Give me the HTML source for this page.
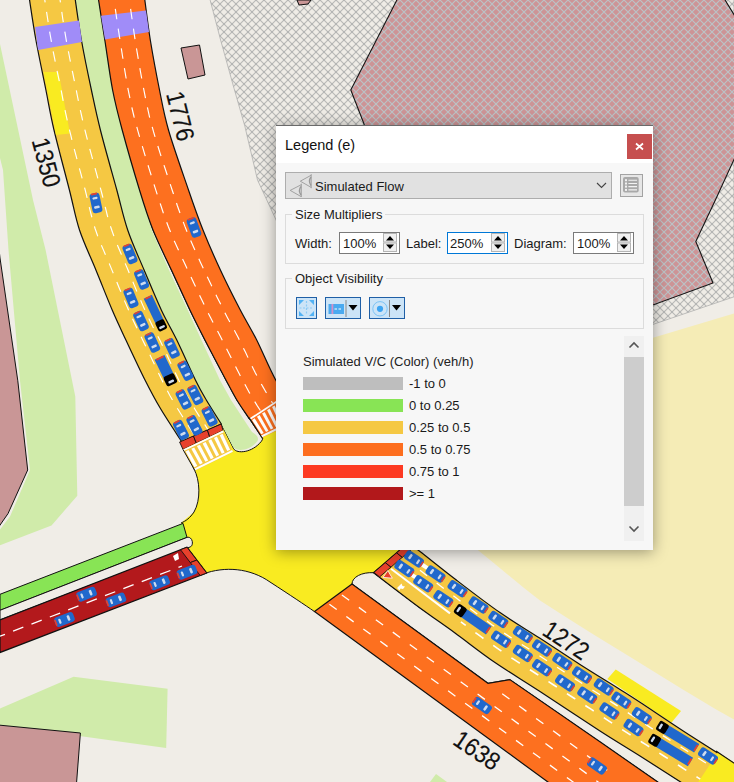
<!DOCTYPE html>
<html><head><meta charset="utf-8">
<style>
html,body{margin:0;padding:0;}
body{width:734px;height:782px;overflow:hidden;position:relative;font-family:"Liberation Sans",sans-serif;}
</style></head><body>
<svg width="734" height="782" viewBox="0 0 734 782" style="position:absolute;left:0;top:0"><defs>
<pattern id="hatch" width="8" height="8" patternUnits="userSpaceOnUse">
<rect width="8" height="8" fill="#efece6"/>
<path d="M0,0 L8,8 M8,0 L0,8" stroke="#b9b9b7" stroke-width="1.15"/>
<rect x="3.3" y="3.3" width="1.4" height="1.4" fill="#aeb0b0"/><rect x="-0.7" y="-0.7" width="1.4" height="1.4" fill="#aeb0b0"/><rect x="7.3" y="7.3" width="1.4" height="1.4" fill="#aeb0b0"/><rect x="7.3" y="-0.7" width="1.4" height="1.4" fill="#aeb0b0"/><rect x="-0.7" y="7.3" width="1.4" height="1.4" fill="#aeb0b0"/>
</pattern>
<pattern id="hatchp" width="8" height="8" patternUnits="userSpaceOnUse">
<rect width="8" height="8" fill="#cd9496"/>
<path d="M0,0 L8,8 M8,0 L0,8" stroke="#bcc3c6" stroke-width="1.15"/>
<rect x="3.3" y="3.3" width="1.4" height="1.4" fill="#b8c0c4"/>
</pattern>
</defs><rect width="734" height="782" fill="#f0ede7"/><path d="M420,500 L479,551 C500,568 520,585 540,600.6 C570,620 610,645 646,666.7 C680,688 710,706 734,719.6 L734,313.6 L653,337.7 L420,420 Z" fill="#f5ecb6"/>
<path d="M209.6,-2 L220.6,40 L234,88.3 L244.8,126 L257.5,180 L275.8,219.4 L300,275 L653,324.4 L734,296.8 L734,-2 Z" fill="url(#hatch)" stroke="#b0b0ae" stroke-width="0.8"/>
<path d="M402,-10 L350.8,90 L364.4,125 L420,200 L653,305 L713,283 L695.8,241.5 L715.4,200 L737,153 L737,19.5 L722,-5 Z" fill="url(#hatchp)" stroke="#151515" stroke-width="1.1"/>
<path d="M297,0 L311,0 L308,4 L299,5 Z" fill="#c99696" stroke="#111" stroke-width="1"/>
<path d="M181,48 L199.5,45 L205,75 L188,79 Z" fill="#c99696" stroke="#111" stroke-width="1"/>
<path d="M0,44 L33,200 L45.6,250 L75.3,396.6 L77.3,495.7 L51.5,525.5 L0,545.3 Z" fill="#d0ebaa"/>
<path d="M-2,150 L3,170 L8.5,250 L20,380.8 L30,470 L10,516.5 L-2,532 Z" fill="#f0ede7"/>
<path d="M-2,240 L0,258 L17.8,380.8 L27.7,470 L8,513.6 L-2,528 Z" fill="#c99696" stroke="#111" stroke-width="1"/>
<path d="M0,708.6 L73.6,676.7 L167.6,688.7 L166.2,748 L0,725 Z" fill="#d0ebaa"/>
<path d="M-2,725 L80.4,733 L76.3,786 L-2,786 Z" fill="#c99696" stroke="#111" stroke-width="1"/>
<path d="M436,774 L447,782 L430,782 Z" fill="#d0ebaa"/>
<path d="M181.7,441.7 L194,469 C200,480 201,500 194,512 L181,523 L186,548 L206.7,573 C225,566 250,568 270,582 C290,595 305,605 314.5,611.6 L352,584 L373.5,572.7 L420,545 L420,400 L276,400 L223,424 Z" fill="#f9eb21"/>
<path d="M181.7,441.7 L194,469 C200,480 201,500 194,512 C190,518 186,521 181,523" fill="none" stroke="#111" stroke-width="1"/>
<path d="M203,574 C225,566 250,568 270,582 C290,595 305,605 314.5,611.6" fill="none" stroke="#111" stroke-width="1"/>
<path d="M607.4,679 L615.7,669.5 L681,711 L671.4,722.8 Z" fill="#f9eb21"/>
<path d="M352,584 C352,577 362,572 373.5,572.7 L420,608 L690,788 L665,787 L509.8,679.6 L488,683.3 Z" fill="#f0ede7" stroke="#111" stroke-width="1"/>
<path d="M74.6,-5 C75.7,2.5 78.6,24.2 81.4,40 C84.2,55.8 88.2,75 91.4,90 C94.6,105 96.2,113.3 100.4,130 C104.6,146.7 112.2,173.3 116.8,190 C121.3,206.7 123.2,216.7 127.7,230 C132.2,243.3 138.5,256.7 144.1,270 C149.7,283.3 155.9,298.3 161.3,310 C166.8,321.7 171.1,328.3 176.8,340 C182.5,351.7 190.5,370 195.4,380 C200.3,390 202,392.7 206.3,400 C210.6,407.3 218.8,420 221.3,424 L233.6,448.7 C237,454 252,453 261.4,441.3 C263,439 263,438 262,437.5 L249,418.4 L236.8,400 L225.9,380 L204.9,340 L189.9,310 L171.4,270 L153,230 L139.5,190 L122.2,130 L112.6,90 L104.8,40 L97.8,-5 Z" fill="#f0ede7" stroke="#111" stroke-width="1"/>
<path d="M74.6,-5 C75.7,2.5 78.6,24.2 81.4,40 C84.2,55.8 88.2,75 91.4,90 C94.6,105 96.2,113.3 100.4,130 C104.6,146.7 112.2,173.3 116.8,190 C121.3,206.7 123.2,216.7 127.7,230 C132.2,243.3 138.5,256.7 144.1,270 C149.7,283.3 155.9,298.3 161.3,310 C166.8,321.7 171.1,328.3 176.8,340 C182.5,351.7 190.5,370 195.4,380 C200.3,390 202,392.7 206.3,400 C210.6,407.3 218.8,420 221.3,424 L233,447 C237,452 250,451 257.5,441 C259,438 257,435 252,432 L252,432 L231,400 L219.9,380 L201.4,340 L187.7,310 L169,270 L151.7,230 L139.5,190 L122.2,130 L112.6,90 L104.8,40 L97.8,-5 Z" fill="#d0ebaa"/>
<path d="M28.8,-5 C30,2.5 33,24.2 35.9,40 C38.8,55.8 42.9,75 45.9,90 C48.9,105 50.1,113.3 54,130 C57.9,146.7 65.2,173.3 69.4,190 C73.7,206.7 75.1,216.7 79.5,230 C83.9,243.3 90.5,256.7 95.9,270 C101.4,283.3 107.2,298.3 112.2,310 C117.2,321.7 120.4,328.3 125.9,340 C131.4,351.7 139.3,368.7 145,380 C150.7,391.3 153.9,397.5 160,407.8 C166.1,418.1 178.1,436.1 181.7,441.7 L221.3,424 C218.8,420 210.6,407.3 206.3,400 C202,392.7 200.3,390 195.4,380 C190.5,370 182.5,351.7 176.8,340 C171.1,328.3 166.8,321.7 161.3,310 C155.9,298.3 149.7,283.3 144.1,270 C138.5,256.7 132.2,243.3 127.7,230 C123.2,216.7 121.3,206.7 116.8,190 C112.2,173.3 104.6,146.7 100.4,130 C96.2,113.3 94.6,105 91.4,90 C88.2,75 84.2,55.8 81.4,40 C78.6,24.2 75.7,2.5 74.6,-5 Z" fill="#f5c843" stroke="#111" stroke-width="1.2"/>
<path d="M97.8,-5 C99,2.5 102.3,24.2 104.8,40 C107.3,55.8 109.7,75 112.6,90 C115.5,105 117.7,113.3 122.2,130 C126.7,146.7 134.4,173.3 139.5,190 C144.6,206.7 147.7,216.7 153,230 C158.3,243.3 165.2,256.7 171.4,270 C177.6,283.3 184.3,298.3 189.9,310 C195.5,321.7 198.9,328.3 204.9,340 C210.9,351.7 220.6,370 225.9,380 C231.2,390 233,393.6 236.8,400 C240.7,406.4 247,415.3 249,418.4 L300,420 C295.9,413.3 282.9,393.3 275.7,380 C268.5,366.7 262.6,351.7 256.7,340 C250.8,328.3 246.4,321.7 240.3,310 C234.2,298.3 226.6,283.3 220.4,270 C214.2,256.7 208.3,243.3 203,230 C197.7,216.7 194.2,206.7 188.5,190 C182.8,173.3 173.3,146.7 168.5,130 C163.7,113.3 162.5,105 159.5,90 C156.5,75 152.9,55.8 150.3,40 C147.8,24.2 145.2,2.5 144.2,-5 Z" fill="#fd701f" stroke="#111" stroke-width="1.2"/>
<path d="M35,27 L79,20.4 L82,42 L38,50 Z" fill="#a08cf8"/>
<path d="M101,15.8 L146,10.4 L149,32 L105,39.5 Z" fill="#a08cf8"/>
<path d="M43.6,72 L58.6,72 L70,133.5 L56,135 Z" fill="#f9eb21"/>
<path d="M0,594.3 L183,523.4 L187,537.4 L0,610.3 Z" fill="#88e455" stroke="#111" stroke-width="1"/>
<path d="M0,610.3 L187,537.4 C193,536 194,546 190,547 L0,619.9 Z" fill="#f0ede7" stroke="#111" stroke-width="1"/>
<path d="M0,619.9 L187,547.2 L206.7,573 L0,652.5 Z" fill="#b3191c" stroke="#111" stroke-width="1.2"/>
<path d="M408,543 C410,544.4 412.2,545.5 420,551.5 C427.8,557.5 441.7,568.8 455,579 C468.3,589.2 485.8,602.7 500,612.6 C514.2,622.5 526.7,629.6 540,638.3 C553.3,646.9 566.7,656 580,664.5 C593.3,673 610,683.2 620,689.5 C630,695.8 629.3,695.3 640,702.3 C650.7,709.3 668.3,721.3 684,731.5 C699.7,741.7 721.3,755.3 734,763.3 C746.7,771.3 755.7,776.8 760,779.5 L690,788 C681.7,782.7 655,765.5 640,756 C625,746.5 616.7,741.8 600,731 C583.3,720.2 557.5,702.9 540,691.5 C522.5,680.1 509.2,672.2 495,662.5 C480.8,652.8 467.5,642.1 455,633 C442.5,623.9 433.6,618 420,608 C406.4,598 381.2,578.6 373.5,572.7 Z" fill="#f5c843" stroke="#111" stroke-width="1.2"/>
<path d="M352,584 L488,683.3 L509.8,679.6 L600,741.8 L665,787 L553,785.7 L314.5,611.6 Z" fill="#fd701f" stroke="#111" stroke-width="1.2"/>
<path d="M44.1,-5 L45.2,2.9 L46.4,10.8 L47.6,18.6 L48.8,26.5 L50.1,34.4 L51.5,42.2 L52.9,50 L54.5,57.8 L56,65.6 L57.6,73.4 L59.3,81.2 L60.9,89 L62.4,96.8 L63.9,104.7 L65.5,112.5 L67.2,120.2 L69,128 L70.9,135.7 L72.8,143.5 L74.8,151.2 L76.9,158.9 L78.9,166.5 L81,174.2 L83,181.9 L85.1,189.6 L87,197.4 L88.8,205.1 L90.7,212.8 L92.7,220.5 L95,228.2 L97.6,235.7 L100.5,243.1 L103.6,250.4 L106.7,257.8 L109.9,265.1 L112.9,272.4 L115.9,279.8 L118.9,287.2 L122,294.5 L125,301.9 L128.2,309.2 L131.4,316.5 L134.8,323.7 L138.2,330.9 L141.7,338 L145.2,345.2 L148.7,352.3 L152.1,359.5 L155.5,366.7 L158.9,373.9 L162.4,381.1 L166,388.2 L169.7,395.2 L173.7,402.1 L177.8,409 L182,415.7 L186.3,422.4 L190.6,429.1 L194.9,435.8" fill="none" stroke="#fff" stroke-width="1.15" stroke-dasharray="10.5,9.5" stroke-dashoffset="3"/>
<path d="M113.3,-5 L114.4,2.6 L115.5,10.2 L116.6,17.9 L117.7,25.5 L118.9,33.1 L120.1,40.7 L121.3,48.3 L122.5,56 L123.7,63.6 L124.9,71.2 L126.2,78.8 L127.5,86.4 L129,93.9 L130.6,101.5 L132.2,109 L134,116.5 L136,123.9 L138,131.4 L140.1,138.8 L142.3,146.2 L144.5,153.6 L146.7,160.9 L149,168.3 L151.3,175.6 L153.6,183 L155.9,190.3 L158.3,197.7 L160.7,205 L163.1,212.3 L165.7,219.6 L168.4,226.8 L171.3,233.9 L174.3,241 L177.5,248.1 L180.7,255 L184,262 L187.3,269 L190.5,276 L193.8,283 L197.1,289.9 L200.4,296.9 L203.7,303.8 L207.1,310.8 L210.5,317.6 L214.1,324.5 L217.7,331.3 L221.2,338.1 L224.7,345 L228.2,351.9 L231.6,358.8 L235.1,365.7 L238.6,372.5 L242.2,379.4 L245.8,386.1 L249.5,392.9 L253.4,399.5 L257.5,406.1 L261.7,412.5 L266,418.9" fill="none" stroke="#fff" stroke-width="1.15" stroke-dasharray="10.5,9.5" stroke-dashoffset="6"/>
<path d="M59.3,-5 L60.5,2.8 L61.6,10.5 L62.7,18.3 L63.9,26.1 L65.2,33.8 L66.5,41.6 L68,49.3 L69.5,57 L71,64.7 L72.6,72.4 L74.2,80.1 L75.8,87.8 L77.3,95.5 L78.9,103.2 L80.5,110.9 L82.2,118.5 L84,126.2 L85.9,133.8 L87.8,141.4 L89.8,149 L91.9,156.6 L93.9,164.1 L96,171.7 L98.1,179.3 L100.1,186.9 L102.1,194.5 L104,202.1 L105.9,209.7 L107.8,217.3 L110,224.9 L112.5,232.3 L115.2,239.7 L118.2,247 L121.3,254.2 L124.3,261.4 L127.4,268.6 L130.4,275.9 L133.4,283.1 L136.4,290.4 L139.5,297.6 L142.6,304.9 L145.8,312 L149.1,319.1 L152.6,326.2 L156.2,333.1 L159.8,340.1 L163.2,347.2 L166.6,354.3 L169.9,361.4 L173.2,368.5 L176.6,375.6 L180,382.7 L183.6,389.7 L187.4,396.6 L191.4,403.3 L195.4,410 L199.6,416.7 L203.9,423.3 L208.1,429.9" fill="none" stroke="#fff" stroke-width="1.15" stroke-dasharray="10.5,9.5" stroke-dashoffset="3"/>
<path d="M128.7,-5 L129.8,2.7 L130.8,10.3 L131.9,18 L133,25.6 L134.1,33.2 L135.3,40.9 L136.5,48.5 L137.8,56.1 L139.1,63.7 L140.4,71.3 L141.8,78.9 L143.2,86.5 L144.7,94.1 L146.2,101.7 L147.8,109.2 L149.5,116.8 L151.5,124.2 L153.5,131.7 L155.7,139.1 L158,146.5 L160.3,153.8 L162.7,161.2 L165.1,168.5 L167.5,175.9 L169.9,183.2 L172.3,190.5 L174.8,197.8 L177.2,205.2 L179.8,212.5 L182.4,219.7 L185.1,226.9 L188,234.1 L191,241.2 L194.1,248.3 L197.3,255.3 L200.5,262.4 L203.8,269.4 L207,276.3 L210.4,283.3 L213.7,290.3 L217.1,297.2 L220.6,304.1 L224,311 L227.6,317.9 L231.3,324.7 L235,331.4 L238.6,338.3 L242,345.2 L245.4,352.1 L248.7,359.1 L252,366.1 L255.4,373 L259,379.8 L262.8,386.6 L266.6,393.3 L270.6,399.9 L274.6,406.5 L278.8,413 L283,419.5" fill="none" stroke="#fff" stroke-width="1.15" stroke-dasharray="10.5,9.5" stroke-dashoffset="6"/>
<path d="M0,636.2 L182,566" fill="none" stroke="#fff" stroke-width="1.3" stroke-dasharray="11,8.7" stroke-dashoffset="5.7"/>
<path d="M420,570.3 L425.1,574.3 L430.2,578.2 L435.4,582.1 L440.5,586.1 L445.6,590 L450.8,593.9 L456,597.8 L461.1,601.7 L466.3,605.6 L471.4,609.5 L476.6,613.4 L481.8,617.2 L487,621.1 L492.2,624.9 L497.5,628.6 L502.8,632.2 L508.2,635.8 L513.6,639.3 L519.1,642.8 L524.6,646.2 L530,649.7 L535.4,653.2 L540.9,656.7 L546.3,660.2 L551.7,663.7 L557.1,667.3 L562.5,670.8 L567.9,674.3 L573.4,677.8 L578.8,681.3 L584.3,684.8 L589.7,688.2 L595.2,691.7 L600.7,695.1 L606.1,698.6 L611.6,702.1 L617,705.6 L622.4,709.1 L627.8,712.6 L633.2,716.2 L638.6,719.8 L644,723.3 L649.4,726.9 L654.8,730.4 L660.3,733.9 L665.7,737.4 L671.1,740.9 L676.6,744.3 L682,747.8 L687.5,751.3 L692.9,754.7 L698.4,758.2 L703.9,761.7 L709.3,765.1 L714.8,768.6 L720.2,772 L725.7,775.5 L731.2,778.9 L736.7,782.3" fill="none" stroke="#fff" stroke-width="1.3" stroke-dasharray="9,12" stroke-dashoffset="0"/>
<path d="M391,568.7 L450,613.4" fill="none" stroke="#fff" stroke-width="2"/>
<path d="M460.9,621.9 L465,624.9 L469.1,627.9 L473.1,630.9 L477.2,633.9 L481.3,636.9 L485.4,639.9 L489.5,642.8 L493.6,645.7 L497.8,648.6 L501.9,651.5 L506.1,654.3 L510.3,657.1 L514.6,659.9 L518.8,662.6 L523.1,665.4 L527.3,668.1 L531.6,670.8 L535.8,673.5 L540.1,676.3 L544.4,679 L548.6,681.7 L552.9,684.5 L557.1,687.2 L561.3,690 L565.6,692.7 L569.8,695.5 L574.1,698.2 L578.3,701 L582.6,703.7 L586.8,706.5 L591,709.2 L595.3,712 L599.5,714.8 L603.7,717.5 L607.9,720.3 L612.2,723.1 L616.4,725.9 L620.6,728.6 L624.9,731.4 L629.2,734.1 L633.4,736.8 L637.7,739.5 L642,742.2 L646.3,744.9 L650.6,747.6 L654.8,750.3 L659.1,753 L663.4,755.7 L667.6,758.4 L671.9,761.1 L676.2,763.8 L680.4,766.5 L684.7,769.3 L689,772 L693.2,774.7 L697.5,777.4 L701.8,780.1 L706,782.8 L710.3,785.5" fill="none" stroke="#fff" stroke-width="1.6" stroke-dasharray="10,12" stroke-dashoffset="4"/>
<path d="M329.4,604.2 L589.8,794.2" fill="none" stroke="#fff" stroke-width="1.3" stroke-dasharray="9,12" stroke-dashoffset="0"/>
<path d="M341.9,595 L598.5,782.3" fill="none" stroke="#fff" stroke-width="1.3" stroke-dasharray="9,12" stroke-dashoffset="0"/>
<path d="M502.2,693.7 L607.2,770.3" fill="none" stroke="#fff" stroke-width="1.3" stroke-dasharray="9,12" stroke-dashoffset="0"/>
<path d="M697.6,783 L718,752.2 L736,763.8 L736,783 Z" fill="#f9eb21"/>
<path d="M716,751 L736,764.5" stroke="#111" stroke-width="1.2"/>
<path d="M179.6,442 L193.5,436 L196.3,443.2 L183,449.5 Z" fill="#e8412c" stroke="#111" stroke-width="0.9"/><path d="M193.5,436 L207.4,430 L209.7,436.8 L196.3,443.2 Z" fill="#e8412c" stroke="#111" stroke-width="0.9"/><path d="M207.4,430 L221.3,424 L223,430.5 L209.7,436.8 Z" fill="#e8412c" stroke="#111" stroke-width="0.9"/>
<path d="M183,449.5 L223,430.5 L233,452 L195,470.7 Z" fill="#f5c843"/><path d="M185.6,451.5 L188.5,450.1 L197.3,465.8 L194.4,467.2 Z" fill="#fff"/><path d="M191.3,448.8 L194.2,447.4 L202.7,463.1 L199.9,464.5 Z" fill="#fff"/><path d="M196.9,446.1 L199.9,444.7 L208.2,460.4 L205.4,461.8 Z" fill="#fff"/><path d="M202.6,443.4 L205.6,442 L213.7,457.8 L210.8,459.2 Z" fill="#fff"/><path d="M208.3,440.7 L211.2,439.3 L219.1,455.1 L216.3,456.5 Z" fill="#fff"/><path d="M214,438 L216.9,436.5 L224.6,452.4 L221.8,453.8 Z" fill="#fff"/><path d="M219.7,435.2 L222.6,433.8 L230.1,449.7 L227.2,451.1 Z" fill="#fff"/><path d="M183.5,450.3 L223.4,431.4" fill="none" stroke="#fff" stroke-width="1.8"/><path d="M194.4,469.6 L232.5,450.9" fill="none" stroke="#fff" stroke-width="2"/>
<path d="M183,449.5 L195,470.7" stroke="#111" stroke-width="1" fill="none"/>
<path d="M249.5,418.3 L290,391.5 L300,419.5 L262,437.5 Z" fill="#fd701f"/><path d="M252,420 L254.6,418.3 L263.7,433.1 L261.2,434.3 Z" fill="#fff"/><path d="M257,416.7 L259.6,415.1 L268.5,430.7 L266,431.9 Z" fill="#fff"/><path d="M262.1,413.5 L264.7,411.9 L273.3,428.3 L270.8,429.5 Z" fill="#fff"/><path d="M267.1,410.3 L269.7,408.6 L278.1,425.9 L275.6,427.1 Z" fill="#fff"/><path d="M272.1,407.1 L274.7,405.4 L282.9,423.5 L280.4,424.7 Z" fill="#fff"/><path d="M277.1,403.9 L279.7,402.2 L287.7,421.1 L285.2,422.3 Z" fill="#fff"/><path d="M282.2,400.7 L284.8,399 L292.5,418.7 L290,419.9 Z" fill="#fff"/><path d="M287.2,397.4 L289.8,395.8 L297.3,416.3 L294.8,417.5 Z" fill="#fff"/><path d="M250,419.1 L290.4,392.6" fill="none" stroke="#fff" stroke-width="1.8"/><path d="M261.4,436.5 L299.5,418.1" fill="none" stroke="#fff" stroke-width="2"/>
<path d="M249,417.5 L262.5,438.5" stroke="#111" stroke-width="1.1"/>
<path d="M187,547.2 L196.8,560.1 L190.3,562.6 L180.5,549.7 Z" fill="#e8412c" stroke="#111" stroke-width="0.9"/><path d="M196.8,560.1 L206.7,573 L200.2,575.5 L190.3,562.6 Z" fill="#e8412c" stroke="#111" stroke-width="0.9"/>
<path d="M373.9,572.4 L385.3,562.6 L391,567.1 L379.6,576.9 Z" fill="#e8412c" stroke="#111" stroke-width="0.9"/><path d="M385.3,562.6 L396.6,552.8 L402.3,557.3 L391,567.1 Z" fill="#e8412c" stroke="#111" stroke-width="0.9"/><path d="M396.6,552.8 L408,543 L413.7,547.5 L402.3,557.3 Z" fill="#e8412c" stroke="#111" stroke-width="0.9"/>
<path d="M387.8,570.6 L392.3,578.2 L383,577.4 Z" fill="#e8412c" stroke="#fff" stroke-width="0.8"/>
<path d="M397,588 L401.5,583.5 L402.5,586 L405,586.5 L403,589 L400.5,588.5 L399.5,590.5 Z" fill="#fff"/>
<path d="M173,556 L178,553 L179,559 L175,561 Z" fill="#fff"/>
<g transform="translate(414.3,576.5) rotate(34)"><rect x="-3.5" y="-2" width="7" height="4" fill="#fff"/></g>
<g transform="translate(424.5,566.2) rotate(34)"><rect x="-3.5" y="-2" width="7" height="4" fill="#fff"/></g>
<g transform="translate(96,203) rotate(-12)"><rect x="-5" y="-10" width="10" height="20" rx="3" fill="#2168cc"/><path d="M-3,-9.2 h6" stroke="#e8412c" stroke-width="1.6"/><rect x="-2.6" y="-6" width="5.2" height="2.2" rx="1" fill="#cfdcef"/><rect x="-2.8" y="3" width="5.6" height="2.6" rx="1" fill="#cfdcef"/></g>
<g transform="translate(130,254) rotate(-22)"><rect x="-5" y="-10" width="10" height="20" rx="3" fill="#2168cc"/><path d="M-3,-9.2 h6" stroke="#e8412c" stroke-width="1.6"/><rect x="-2.6" y="-6" width="5.2" height="2.2" rx="1" fill="#cfdcef"/><rect x="-2.8" y="3" width="5.6" height="2.6" rx="1" fill="#cfdcef"/></g>
<g transform="translate(141.6,279.5) rotate(-22)"><rect x="-5" y="-10" width="10" height="20" rx="3" fill="#2168cc"/><path d="M-3,-9.2 h6" stroke="#e8412c" stroke-width="1.6"/><rect x="-2.6" y="-6" width="5.2" height="2.2" rx="1" fill="#cfdcef"/><rect x="-2.8" y="3" width="5.6" height="2.6" rx="1" fill="#cfdcef"/></g>
<g transform="translate(131,298) rotate(-22)"><rect x="-5" y="-10" width="10" height="20" rx="3" fill="#2168cc"/><path d="M-3,-9.2 h6" stroke="#e8412c" stroke-width="1.6"/><rect x="-2.6" y="-6" width="5.2" height="2.2" rx="1" fill="#cfdcef"/><rect x="-2.8" y="3" width="5.6" height="2.6" rx="1" fill="#cfdcef"/></g>
<g transform="translate(141,321) rotate(-25)"><rect x="-5" y="-10" width="10" height="20" rx="3" fill="#2168cc"/><path d="M-3,-9.2 h6" stroke="#e8412c" stroke-width="1.6"/><rect x="-2.6" y="-6" width="5.2" height="2.2" rx="1" fill="#cfdcef"/><rect x="-2.8" y="3" width="5.6" height="2.6" rx="1" fill="#cfdcef"/></g>
<g transform="translate(152.3,342.5) rotate(-25)"><rect x="-5" y="-10" width="10" height="20" rx="3" fill="#2168cc"/><path d="M-3,-9.2 h6" stroke="#e8412c" stroke-width="1.6"/><rect x="-2.6" y="-6" width="5.2" height="2.2" rx="1" fill="#cfdcef"/><rect x="-2.8" y="3" width="5.6" height="2.6" rx="1" fill="#cfdcef"/></g>
<g transform="translate(172,348.4) rotate(-25)"><rect x="-5" y="-10" width="10" height="20" rx="3" fill="#2168cc"/><path d="M-3,-9.2 h6" stroke="#e8412c" stroke-width="1.6"/><rect x="-2.6" y="-6" width="5.2" height="2.2" rx="1" fill="#cfdcef"/><rect x="-2.8" y="3" width="5.6" height="2.6" rx="1" fill="#cfdcef"/></g>
<g transform="translate(185.4,370.8) rotate(-27)"><rect x="-5" y="-10" width="10" height="20" rx="3" fill="#2168cc"/><path d="M-3,-9.2 h6" stroke="#e8412c" stroke-width="1.6"/><rect x="-2.6" y="-6" width="5.2" height="2.2" rx="1" fill="#cfdcef"/><rect x="-2.8" y="3" width="5.6" height="2.6" rx="1" fill="#cfdcef"/></g>
<g transform="translate(183.6,399.5) rotate(-27)"><rect x="-5" y="-10" width="10" height="20" rx="3" fill="#2168cc"/><path d="M-3,-9.2 h6" stroke="#e8412c" stroke-width="1.6"/><rect x="-2.6" y="-6" width="5.2" height="2.2" rx="1" fill="#cfdcef"/><rect x="-2.8" y="3" width="5.6" height="2.6" rx="1" fill="#cfdcef"/></g>
<g transform="translate(195.3,395) rotate(-27)"><rect x="-5" y="-10" width="10" height="20" rx="3" fill="#2168cc"/><path d="M-3,-9.2 h6" stroke="#e8412c" stroke-width="1.6"/><rect x="-2.6" y="-6" width="5.2" height="2.2" rx="1" fill="#cfdcef"/><rect x="-2.8" y="3" width="5.6" height="2.6" rx="1" fill="#cfdcef"/></g>
<g transform="translate(181,430) rotate(-27)"><rect x="-5" y="-10" width="10" height="20" rx="3" fill="#2168cc"/><path d="M-3,-9.2 h6" stroke="#e8412c" stroke-width="1.6"/><rect x="-2.6" y="-6" width="5.2" height="2.2" rx="1" fill="#cfdcef"/><rect x="-2.8" y="3" width="5.6" height="2.6" rx="1" fill="#cfdcef"/></g>
<g transform="translate(194.4,425.4) rotate(-27)"><rect x="-5" y="-10" width="10" height="20" rx="3" fill="#2168cc"/><path d="M-3,-9.2 h6" stroke="#e8412c" stroke-width="1.6"/><rect x="-2.6" y="-6" width="5.2" height="2.2" rx="1" fill="#cfdcef"/><rect x="-2.8" y="3" width="5.6" height="2.6" rx="1" fill="#cfdcef"/></g>
<g transform="translate(209.6,416.5) rotate(-27)"><rect x="-5" y="-10" width="10" height="20" rx="3" fill="#2168cc"/><path d="M-3,-9.2 h6" stroke="#e8412c" stroke-width="1.6"/><rect x="-2.6" y="-6" width="5.2" height="2.2" rx="1" fill="#cfdcef"/><rect x="-2.8" y="3" width="5.6" height="2.6" rx="1" fill="#cfdcef"/></g>
<g transform="translate(155.6,313.4) rotate(-25.2)"><rect x="-4.5" y="-18.4" width="9" height="27.3" fill="#2168cc"/><path d="M-3,-17.5 h6" stroke="#e8412c" stroke-width="1.8"/><rect x="-4.8" y="7.9" width="9.6" height="10.5" rx="2.2" fill="#000"/><rect x="-3" y="13.9" width="6" height="2.4" rx="1" fill="#cfdcef"/></g>
<g transform="translate(166.1,370.9) rotate(-25.8)"><rect x="-5.5" y="-15.1" width="11" height="20.6" fill="#2168cc"/><path d="M-4,-14.2 h8" stroke="#e8412c" stroke-width="1.8"/><rect x="-5.8" y="4.6" width="11.6" height="10.5" rx="2.2" fill="#000"/><rect x="-3" y="10.6" width="6" height="2.4" rx="1" fill="#cfdcef"/></g>
<g transform="translate(194,227.5) rotate(-20)"><rect x="-5" y="-10" width="10" height="20" rx="3" fill="#2168cc"/><path d="M-3,-9.2 h6" stroke="#e8412c" stroke-width="1.6"/><rect x="-2.6" y="-6" width="5.2" height="2.2" rx="1" fill="#cfdcef"/><rect x="-2.8" y="3" width="5.6" height="2.6" rx="1" fill="#cfdcef"/></g>
<g transform="translate(64.5,619.5) rotate(-111)"><rect x="-5" y="-10" width="10" height="20" rx="3" fill="#2168cc"/><path d="M-3,-9.2 h6" stroke="#e8412c" stroke-width="1.6"/><rect x="-2.6" y="-6" width="5.2" height="2.2" rx="1" fill="#cfdcef"/><rect x="-2.8" y="3" width="5.6" height="2.6" rx="1" fill="#cfdcef"/></g>
<g transform="translate(86.6,594.2) rotate(-111)"><rect x="-5" y="-10" width="10" height="20" rx="3" fill="#2168cc"/><path d="M-3,-9.2 h6" stroke="#e8412c" stroke-width="1.6"/><rect x="-2.6" y="-6" width="5.2" height="2.2" rx="1" fill="#cfdcef"/><rect x="-2.8" y="3" width="5.6" height="2.6" rx="1" fill="#cfdcef"/></g>
<g transform="translate(116,599.9) rotate(-111)"><rect x="-5" y="-10" width="10" height="20" rx="3" fill="#2168cc"/><path d="M-3,-9.2 h6" stroke="#e8412c" stroke-width="1.6"/><rect x="-2.6" y="-6" width="5.2" height="2.2" rx="1" fill="#cfdcef"/><rect x="-2.8" y="3" width="5.6" height="2.6" rx="1" fill="#cfdcef"/></g>
<g transform="translate(159.7,582.7) rotate(-111)"><rect x="-5" y="-10" width="10" height="20" rx="3" fill="#2168cc"/><path d="M-3,-9.2 h6" stroke="#e8412c" stroke-width="1.6"/><rect x="-2.6" y="-6" width="5.2" height="2.2" rx="1" fill="#cfdcef"/><rect x="-2.8" y="3" width="5.6" height="2.6" rx="1" fill="#cfdcef"/></g>
<g transform="translate(187,572.2) rotate(-111)"><rect x="-5" y="-10" width="10" height="20" rx="3" fill="#2168cc"/><path d="M-3,-9.2 h6" stroke="#e8412c" stroke-width="1.6"/><rect x="-2.6" y="-6" width="5.2" height="2.2" rx="1" fill="#cfdcef"/><rect x="-2.8" y="3" width="5.6" height="2.6" rx="1" fill="#cfdcef"/></g>
<g transform="translate(414,559) rotate(124)"><rect x="-5" y="-10" width="10" height="20" rx="3" fill="#2168cc"/><path d="M-3,-9.2 h6" stroke="#e8412c" stroke-width="1.6"/><rect x="-2.6" y="-6" width="5.2" height="2.2" rx="1" fill="#cfdcef"/><rect x="-2.8" y="3" width="5.6" height="2.6" rx="1" fill="#cfdcef"/></g>
<g transform="translate(435.5,574) rotate(124)"><rect x="-5" y="-10" width="10" height="20" rx="3" fill="#2168cc"/><path d="M-3,-9.2 h6" stroke="#e8412c" stroke-width="1.6"/><rect x="-2.6" y="-6" width="5.2" height="2.2" rx="1" fill="#cfdcef"/><rect x="-2.8" y="3" width="5.6" height="2.6" rx="1" fill="#cfdcef"/></g>
<g transform="translate(457.5,588.8) rotate(124)"><rect x="-5" y="-10" width="10" height="20" rx="3" fill="#2168cc"/><path d="M-3,-9.2 h6" stroke="#e8412c" stroke-width="1.6"/><rect x="-2.6" y="-6" width="5.2" height="2.2" rx="1" fill="#cfdcef"/><rect x="-2.8" y="3" width="5.6" height="2.6" rx="1" fill="#cfdcef"/></g>
<g transform="translate(478.5,605) rotate(124)"><rect x="-5" y="-10" width="10" height="20" rx="3" fill="#2168cc"/><path d="M-3,-9.2 h6" stroke="#e8412c" stroke-width="1.6"/><rect x="-2.6" y="-6" width="5.2" height="2.2" rx="1" fill="#cfdcef"/><rect x="-2.8" y="3" width="5.6" height="2.6" rx="1" fill="#cfdcef"/></g>
<g transform="translate(498.3,619.5) rotate(124)"><rect x="-5" y="-10" width="10" height="20" rx="3" fill="#2168cc"/><path d="M-3,-9.2 h6" stroke="#e8412c" stroke-width="1.6"/><rect x="-2.6" y="-6" width="5.2" height="2.2" rx="1" fill="#cfdcef"/><rect x="-2.8" y="3" width="5.6" height="2.6" rx="1" fill="#cfdcef"/></g>
<g transform="translate(522.8,634.5) rotate(124)"><rect x="-5" y="-10" width="10" height="20" rx="3" fill="#2168cc"/><path d="M-3,-9.2 h6" stroke="#e8412c" stroke-width="1.6"/><rect x="-2.6" y="-6" width="5.2" height="2.2" rx="1" fill="#cfdcef"/><rect x="-2.8" y="3" width="5.6" height="2.6" rx="1" fill="#cfdcef"/></g>
<g transform="translate(542,648) rotate(124)"><rect x="-5" y="-10" width="10" height="20" rx="3" fill="#2168cc"/><path d="M-3,-9.2 h6" stroke="#e8412c" stroke-width="1.6"/><rect x="-2.6" y="-6" width="5.2" height="2.2" rx="1" fill="#cfdcef"/><rect x="-2.8" y="3" width="5.6" height="2.6" rx="1" fill="#cfdcef"/></g>
<g transform="translate(562.3,661.6) rotate(124)"><rect x="-5" y="-10" width="10" height="20" rx="3" fill="#2168cc"/><path d="M-3,-9.2 h6" stroke="#e8412c" stroke-width="1.6"/><rect x="-2.6" y="-6" width="5.2" height="2.2" rx="1" fill="#cfdcef"/><rect x="-2.8" y="3" width="5.6" height="2.6" rx="1" fill="#cfdcef"/></g>
<g transform="translate(582,675) rotate(124)"><rect x="-5" y="-10" width="10" height="20" rx="3" fill="#2168cc"/><path d="M-3,-9.2 h6" stroke="#e8412c" stroke-width="1.6"/><rect x="-2.6" y="-6" width="5.2" height="2.2" rx="1" fill="#cfdcef"/><rect x="-2.8" y="3" width="5.6" height="2.6" rx="1" fill="#cfdcef"/></g>
<g transform="translate(603.7,687) rotate(124)"><rect x="-5" y="-10" width="10" height="20" rx="3" fill="#2168cc"/><path d="M-3,-9.2 h6" stroke="#e8412c" stroke-width="1.6"/><rect x="-2.6" y="-6" width="5.2" height="2.2" rx="1" fill="#cfdcef"/><rect x="-2.8" y="3" width="5.6" height="2.6" rx="1" fill="#cfdcef"/></g>
<g transform="translate(621.3,700.3) rotate(124)"><rect x="-5" y="-10" width="10" height="20" rx="3" fill="#2168cc"/><path d="M-3,-9.2 h6" stroke="#e8412c" stroke-width="1.6"/><rect x="-2.6" y="-6" width="5.2" height="2.2" rx="1" fill="#cfdcef"/><rect x="-2.8" y="3" width="5.6" height="2.6" rx="1" fill="#cfdcef"/></g>
<g transform="translate(641.8,715.7) rotate(124)"><rect x="-5" y="-10" width="10" height="20" rx="3" fill="#2168cc"/><path d="M-3,-9.2 h6" stroke="#e8412c" stroke-width="1.6"/><rect x="-2.6" y="-6" width="5.2" height="2.2" rx="1" fill="#cfdcef"/><rect x="-2.8" y="3" width="5.6" height="2.6" rx="1" fill="#cfdcef"/></g>
<g transform="translate(708,756) rotate(124)"><rect x="-5" y="-10" width="10" height="20" rx="3" fill="#2168cc"/><path d="M-3,-9.2 h6" stroke="#e8412c" stroke-width="1.6"/><rect x="-2.6" y="-6" width="5.2" height="2.2" rx="1" fill="#cfdcef"/><rect x="-2.8" y="3" width="5.6" height="2.6" rx="1" fill="#cfdcef"/></g>
<g transform="translate(404.3,568.6) rotate(124)"><rect x="-5" y="-10" width="10" height="20" rx="3" fill="#2168cc"/><path d="M-3,-9.2 h6" stroke="#e8412c" stroke-width="1.6"/><rect x="-2.6" y="-6" width="5.2" height="2.2" rx="1" fill="#cfdcef"/><rect x="-2.8" y="3" width="5.6" height="2.6" rx="1" fill="#cfdcef"/></g>
<g transform="translate(423.2,583.8) rotate(124)"><rect x="-5" y="-10" width="10" height="20" rx="3" fill="#2168cc"/><path d="M-3,-9.2 h6" stroke="#e8412c" stroke-width="1.6"/><rect x="-2.6" y="-6" width="5.2" height="2.2" rx="1" fill="#cfdcef"/><rect x="-2.8" y="3" width="5.6" height="2.6" rx="1" fill="#cfdcef"/></g>
<g transform="translate(443.3,598.8) rotate(124)"><rect x="-5" y="-10" width="10" height="20" rx="3" fill="#2168cc"/><path d="M-3,-9.2 h6" stroke="#e8412c" stroke-width="1.6"/><rect x="-2.6" y="-6" width="5.2" height="2.2" rx="1" fill="#cfdcef"/><rect x="-2.8" y="3" width="5.6" height="2.6" rx="1" fill="#cfdcef"/></g>
<g transform="translate(501,639.2) rotate(124)"><rect x="-5" y="-10" width="10" height="20" rx="3" fill="#2168cc"/><path d="M-3,-9.2 h6" stroke="#e8412c" stroke-width="1.6"/><rect x="-2.6" y="-6" width="5.2" height="2.2" rx="1" fill="#cfdcef"/><rect x="-2.8" y="3" width="5.6" height="2.6" rx="1" fill="#cfdcef"/></g>
<g transform="translate(522.8,653.5) rotate(124)"><rect x="-5" y="-10" width="10" height="20" rx="3" fill="#2168cc"/><path d="M-3,-9.2 h6" stroke="#e8412c" stroke-width="1.6"/><rect x="-2.6" y="-6" width="5.2" height="2.2" rx="1" fill="#cfdcef"/><rect x="-2.8" y="3" width="5.6" height="2.6" rx="1" fill="#cfdcef"/></g>
<g transform="translate(542,667.8) rotate(124)"><rect x="-5" y="-10" width="10" height="20" rx="3" fill="#2168cc"/><path d="M-3,-9.2 h6" stroke="#e8412c" stroke-width="1.6"/><rect x="-2.6" y="-6" width="5.2" height="2.2" rx="1" fill="#cfdcef"/><rect x="-2.8" y="3" width="5.6" height="2.6" rx="1" fill="#cfdcef"/></g>
<g transform="translate(565,683) rotate(124)"><rect x="-5" y="-10" width="10" height="20" rx="3" fill="#2168cc"/><path d="M-3,-9.2 h6" stroke="#e8412c" stroke-width="1.6"/><rect x="-2.6" y="-6" width="5.2" height="2.2" rx="1" fill="#cfdcef"/><rect x="-2.8" y="3" width="5.6" height="2.6" rx="1" fill="#cfdcef"/></g>
<g transform="translate(587.2,695.3) rotate(124)"><rect x="-5" y="-10" width="10" height="20" rx="3" fill="#2168cc"/><path d="M-3,-9.2 h6" stroke="#e8412c" stroke-width="1.6"/><rect x="-2.6" y="-6" width="5.2" height="2.2" rx="1" fill="#cfdcef"/><rect x="-2.8" y="3" width="5.6" height="2.6" rx="1" fill="#cfdcef"/></g>
<g transform="translate(609.4,711) rotate(124)"><rect x="-5" y="-10" width="10" height="20" rx="3" fill="#2168cc"/><path d="M-3,-9.2 h6" stroke="#e8412c" stroke-width="1.6"/><rect x="-2.6" y="-6" width="5.2" height="2.2" rx="1" fill="#cfdcef"/><rect x="-2.8" y="3" width="5.6" height="2.6" rx="1" fill="#cfdcef"/></g>
<g transform="translate(633.5,727.6) rotate(124)"><rect x="-5" y="-10" width="10" height="20" rx="3" fill="#2168cc"/><path d="M-3,-9.2 h6" stroke="#e8412c" stroke-width="1.6"/><rect x="-2.6" y="-6" width="5.2" height="2.2" rx="1" fill="#cfdcef"/><rect x="-2.8" y="3" width="5.6" height="2.6" rx="1" fill="#cfdcef"/></g>
<g transform="translate(472.4,619) rotate(124.9)"><rect x="-5" y="-20" width="10" height="30.5" fill="#2168cc"/><path d="M-3.5,-19.1 h7" stroke="#e8412c" stroke-width="1.8"/><rect x="-5.3" y="9.5" width="10.6" height="10.5" rx="2.2" fill="#000"/><rect x="-3" y="15.5" width="6" height="2.4" rx="1" fill="#cfdcef"/></g>
<g transform="translate(677.3,736.5) rotate(121.4)"><rect x="-5" y="-22.7" width="10" height="36" fill="#2168cc"/><path d="M-3.5,-21.8 h7" stroke="#e8412c" stroke-width="1.8"/><rect x="-5.3" y="12.2" width="10.6" height="10.5" rx="2.2" fill="#000"/><rect x="-3" y="18.2" width="6" height="2.4" rx="1" fill="#cfdcef"/></g>
<g transform="translate(670.3,749.8) rotate(121.2)"><rect x="-5" y="-23.6" width="10" height="37.7" fill="#2168cc"/><path d="M-3.5,-22.7 h7" stroke="#e8412c" stroke-width="1.8"/><rect x="-5.3" y="13.1" width="10.6" height="10.5" rx="2.2" fill="#000"/><rect x="-3" y="19.1" width="6" height="2.4" rx="1" fill="#cfdcef"/></g>
<g transform="translate(482,705.5) rotate(-55)"><rect x="-5" y="-10" width="10" height="20" rx="3" fill="#2168cc"/><path d="M-3,-9.2 h6" stroke="#e8412c" stroke-width="1.6"/><rect x="-2.6" y="-6" width="5.2" height="2.2" rx="1" fill="#cfdcef"/><rect x="-2.8" y="3" width="5.6" height="2.6" rx="1" fill="#cfdcef"/></g>
<g transform="translate(597,766) rotate(-55)"><rect x="-5" y="-10" width="10" height="20" rx="3" fill="#2168cc"/><path d="M-3,-9.2 h6" stroke="#e8412c" stroke-width="1.6"/><rect x="-2.6" y="-6" width="5.2" height="2.2" rx="1" fill="#cfdcef"/><rect x="-2.8" y="3" width="5.6" height="2.6" rx="1" fill="#cfdcef"/></g>
<g font-family="Liberation Sans" font-size="25" fill="#111" stroke="#111" stroke-width="0.15">
<text x="0" y="0" transform="translate(166,94) rotate(76)" textLength="50" lengthAdjust="spacingAndGlyphs">1776</text>
<text x="0" y="0" transform="translate(31.5,140.5) rotate(75)" textLength="50" lengthAdjust="spacingAndGlyphs">1350</text>
<text x="0" y="0" transform="translate(541,634) rotate(33.5)" textLength="49" lengthAdjust="spacingAndGlyphs">1272</text>
<text x="0" y="0" transform="translate(451.5,743.5) rotate(34)" textLength="50" lengthAdjust="spacingAndGlyphs">1638</text>
</g>
</svg>
<div id="dlg" style="position:absolute;left:276px;top:125px;width:377px;height:425px;background:#f7f7f7;box-shadow:0 2px 14px rgba(0,0,0,0.38);font-family:'Liberation Sans',sans-serif;font-size:13px;color:#1a1a1a;">
  <div style="position:absolute;left:0;top:0;width:377px;height:38px;background:#fff;"></div>
  <div style="position:absolute;left:0;top:0;width:377px;height:1px;background:#6a6a6a;"></div>
  <div style="position:absolute;left:9px;top:12px;font-size:14.5px;line-height:17px;color:#111;">Legend (e)</div>
  <div style="position:absolute;left:351px;top:9px;width:25px;height:25px;background:#c64f4f;"></div>
  <svg style="position:absolute;left:359px;top:17px" width="9" height="9"><path d="M1,1.5 L8,7.5 M8,1.5 L1,7.5" stroke="#fff" stroke-width="1.7"/></svg>
  <!-- dropdown -->
  <div style="position:absolute;left:9px;top:47px;width:325px;height:25px;background:#e1e1e1;border:1px solid #adadad;"></div>
  <svg style="position:absolute;left:12px;top:48px" width="26" height="24"><g fill="none" stroke="#9a9a9a" stroke-width="0.9"><path d="M2.2,17.4 L13.3,11.7 M2.2,17.4 L13.3,23.7 M13.3,10.7 v14" /><path d="M13,13.5 q-3,4 0,8.5" stroke-width="1.4"/><path d="M12.3,8.2 L23.2,2.2 M12.3,8.2 L23.2,14.4 M23.2,1.2 v14"/><path d="M23,4 q-3,4 0,8.5" stroke-width="1.4"/></g></svg>
  <div style="position:absolute;left:39px;top:54px;line-height:15px;">Simulated Flow</div>
  <svg style="position:absolute;left:320px;top:57px" width="11" height="7"><path d="M1,1 L5.5,5.5 L10,1" fill="none" stroke="#444" stroke-width="1.1"/></svg>
  <div style="position:absolute;left:344px;top:49px;width:21px;height:21px;background:#e6e6e6;border:1px solid #a3a3a3;"></div>
  <svg style="position:absolute;left:347px;top:52px" width="16" height="16"><rect x="0" y="0" width="15.7" height="15.5" rx="2" fill="#a9a9a9"/><g fill="#f2f2f2"><rect x="2" y="2.2" width="2" height="2"/><rect x="2" y="5.5" width="2" height="2"/><rect x="2" y="8.6" width="2" height="2"/><rect x="2" y="11.9" width="2" height="2"/></g><path d="M5.4,3.2 h8.6 M5.4,6.5 h8.6 M5.4,9.6 h8.6 M5.4,12.9 h8.6" stroke="#f2f2f2" stroke-width="1.1"/></svg>
  <!-- group 1 -->
  <div style="position:absolute;left:9px;top:89px;width:357px;height:48px;border:1px solid #dcdcdc;"></div>
  <div style="position:absolute;left:16px;top:82px;padding:0 3px;background:#f7f7f7;line-height:16px;">Size Multipliers</div>
  <div style="position:absolute;left:19px;top:111px;line-height:15px;">Width:</div>
  <div style="position:absolute;left:63px;top:107px;width:59px;height:20px;border:1px solid #7a7a7a;background:#fff;"></div>
  <div style="position:absolute;left:67px;top:111px;line-height:15px;">100%</div>
  <div style="position:absolute;left:130px;top:111px;line-height:15px;">Label:</div>
  <div style="position:absolute;left:171px;top:107px;width:59px;height:20px;border:1px solid #0078d7;background:#fff;"></div>
  <div style="position:absolute;left:174px;top:111px;line-height:15px;">250%</div>
  <div style="position:absolute;left:238px;top:111px;line-height:15px;">Diagram:</div>
  <div style="position:absolute;left:297px;top:107px;width:59px;height:20px;border:1px solid #7a7a7a;background:#fff;"></div>
  <div style="position:absolute;left:301px;top:111px;line-height:15px;">100%</div>
  <!-- spinners -->
  <svg style="position:absolute;left:107px;top:108px" width="15" height="20"><rect x="0.5" y="0.5" width="13" height="8.5" fill="#f0f0f0" stroke="#b5b5b5"/><rect x="0.5" y="10" width="13" height="8.5" fill="#f0f0f0" stroke="#b5b5b5"/><path d="M3,7.5 L7,3 L11,7.5 Z M3,11.5 L7,16 L11,11.5 Z" fill="#000"/></svg>
  <svg style="position:absolute;left:215px;top:108px" width="15" height="20"><rect x="0.5" y="0.5" width="13" height="8.5" fill="#f0f0f0" stroke="#b5b5b5"/><rect x="0.5" y="10" width="13" height="8.5" fill="#f0f0f0" stroke="#b5b5b5"/><path d="M3,7.5 L7,3 L11,7.5 Z M3,11.5 L7,16 L11,11.5 Z" fill="#000"/></svg>
  <svg style="position:absolute;left:341px;top:108px" width="15" height="20"><rect x="0.5" y="0.5" width="13" height="8.5" fill="#f0f0f0" stroke="#b5b5b5"/><rect x="0.5" y="10" width="13" height="8.5" fill="#f0f0f0" stroke="#b5b5b5"/><path d="M3,7.5 L7,3 L11,7.5 Z M3,11.5 L7,16 L11,11.5 Z" fill="#000"/></svg>
  <!-- group 2 -->
  <div style="position:absolute;left:9px;top:153px;width:357px;height:49px;border:1px solid #dcdcdc;"></div>
  <div style="position:absolute;left:16px;top:146px;padding:0 3px;background:#f7f7f7;line-height:16px;">Object Visibility</div>
  <svg style="position:absolute;left:20px;top:172px" width="130" height="23">
    <rect x="0.5" y="0.5" width="20" height="21" fill="#cce4f7" stroke="#1f5fa6"/>
    <g fill="#52b2f4"><path d="M3,3 L8,3 L3,8 Z M18,3 L13,3 L18,8 Z M3,19 L8,19 L3,14 Z M18,19 L13,19 L18,14 Z"/></g>
    <path d="M10.5,4 v14 M3.5,11 h14" stroke="#8ccaf5" stroke-width="1.2" stroke-dasharray="2,1.5"/>
    <rect x="29.5" y="0.5" width="35" height="21" fill="#cce4f7" stroke="#1f5fa6"/>
    <rect x="32.5" y="7" width="15.5" height="10" fill="#4aaaf0"/><rect x="35.5" y="7" width="1.8" height="10" fill="#d58fc8"/><path d="M38.5,12 h2.5 M42.5,12 h2.5" stroke="#fff" stroke-width="1"/>
    <path d="M50,3 v17" stroke="#888" stroke-width="1"/><path d="M52.5,8 L61.5,8 L57,13.5 Z" fill="#000"/>
    <rect x="73.5" y="0.5" width="35" height="21" fill="#cce4f7" stroke="#1f5fa6"/>
    <circle cx="84" cy="11.8" r="7.2" fill="none" stroke="#7cc3f5" stroke-width="1"/><circle cx="84" cy="11.8" r="3.1" fill="#3ea5f2"/>
    <path d="M93.5,3 v17" stroke="#888" stroke-width="1"/><path d="M96,8 L105,8 L100.5,13.5 Z" fill="#000"/>
  </svg>
  <!-- legend list -->
  <div style="position:absolute;left:27px;top:229px;line-height:16px;color:#222;">Simulated V/C (Color) (veh/h)</div>
  <div style="position:absolute;left:27px;top:252px;width:100px;height:13px;background:#bebebe;"></div>
  <div style="position:absolute;left:27px;top:274px;width:100px;height:13px;background:#88e455;"></div>
  <div style="position:absolute;left:27px;top:296px;width:100px;height:13px;background:#f5c843;"></div>
  <div style="position:absolute;left:27px;top:318px;width:100px;height:13px;background:#fd6e1f;"></div>
  <div style="position:absolute;left:27px;top:340px;width:100px;height:13px;background:#fd3a22;"></div>
  <div style="position:absolute;left:27px;top:362px;width:100px;height:13px;background:#b2181b;"></div>
  <div style="position:absolute;left:133px;top:251px;line-height:16px;">-1 to 0</div>
  <div style="position:absolute;left:133px;top:273px;line-height:16px;">0 to 0.25</div>
  <div style="position:absolute;left:133px;top:295px;line-height:16px;">0.25 to 0.5</div>
  <div style="position:absolute;left:133px;top:317px;line-height:16px;">0.5 to 0.75</div>
  <div style="position:absolute;left:133px;top:339px;line-height:16px;">0.75 to 1</div>
  <div style="position:absolute;left:133px;top:361px;line-height:16px;">&gt;= 1</div>
  <!-- scrollbar -->
  <div style="position:absolute;left:348px;top:211px;width:20px;height:205px;background:#f0f0f0;"></div>
  <div style="position:absolute;left:348px;top:232px;width:20px;height:149px;background:#cdcdcd;"></div>
  <svg style="position:absolute;left:352px;top:216px" width="12" height="8"><path d="M1.5,6.5 L6,2 L10.5,6.5" fill="none" stroke="#555" stroke-width="1.6"/></svg>
  <svg style="position:absolute;left:352px;top:400px" width="12" height="8"><path d="M1.5,1.5 L6,6 L10.5,1.5" fill="none" stroke="#555" stroke-width="1.6"/></svg>
</div>

</body></html>
